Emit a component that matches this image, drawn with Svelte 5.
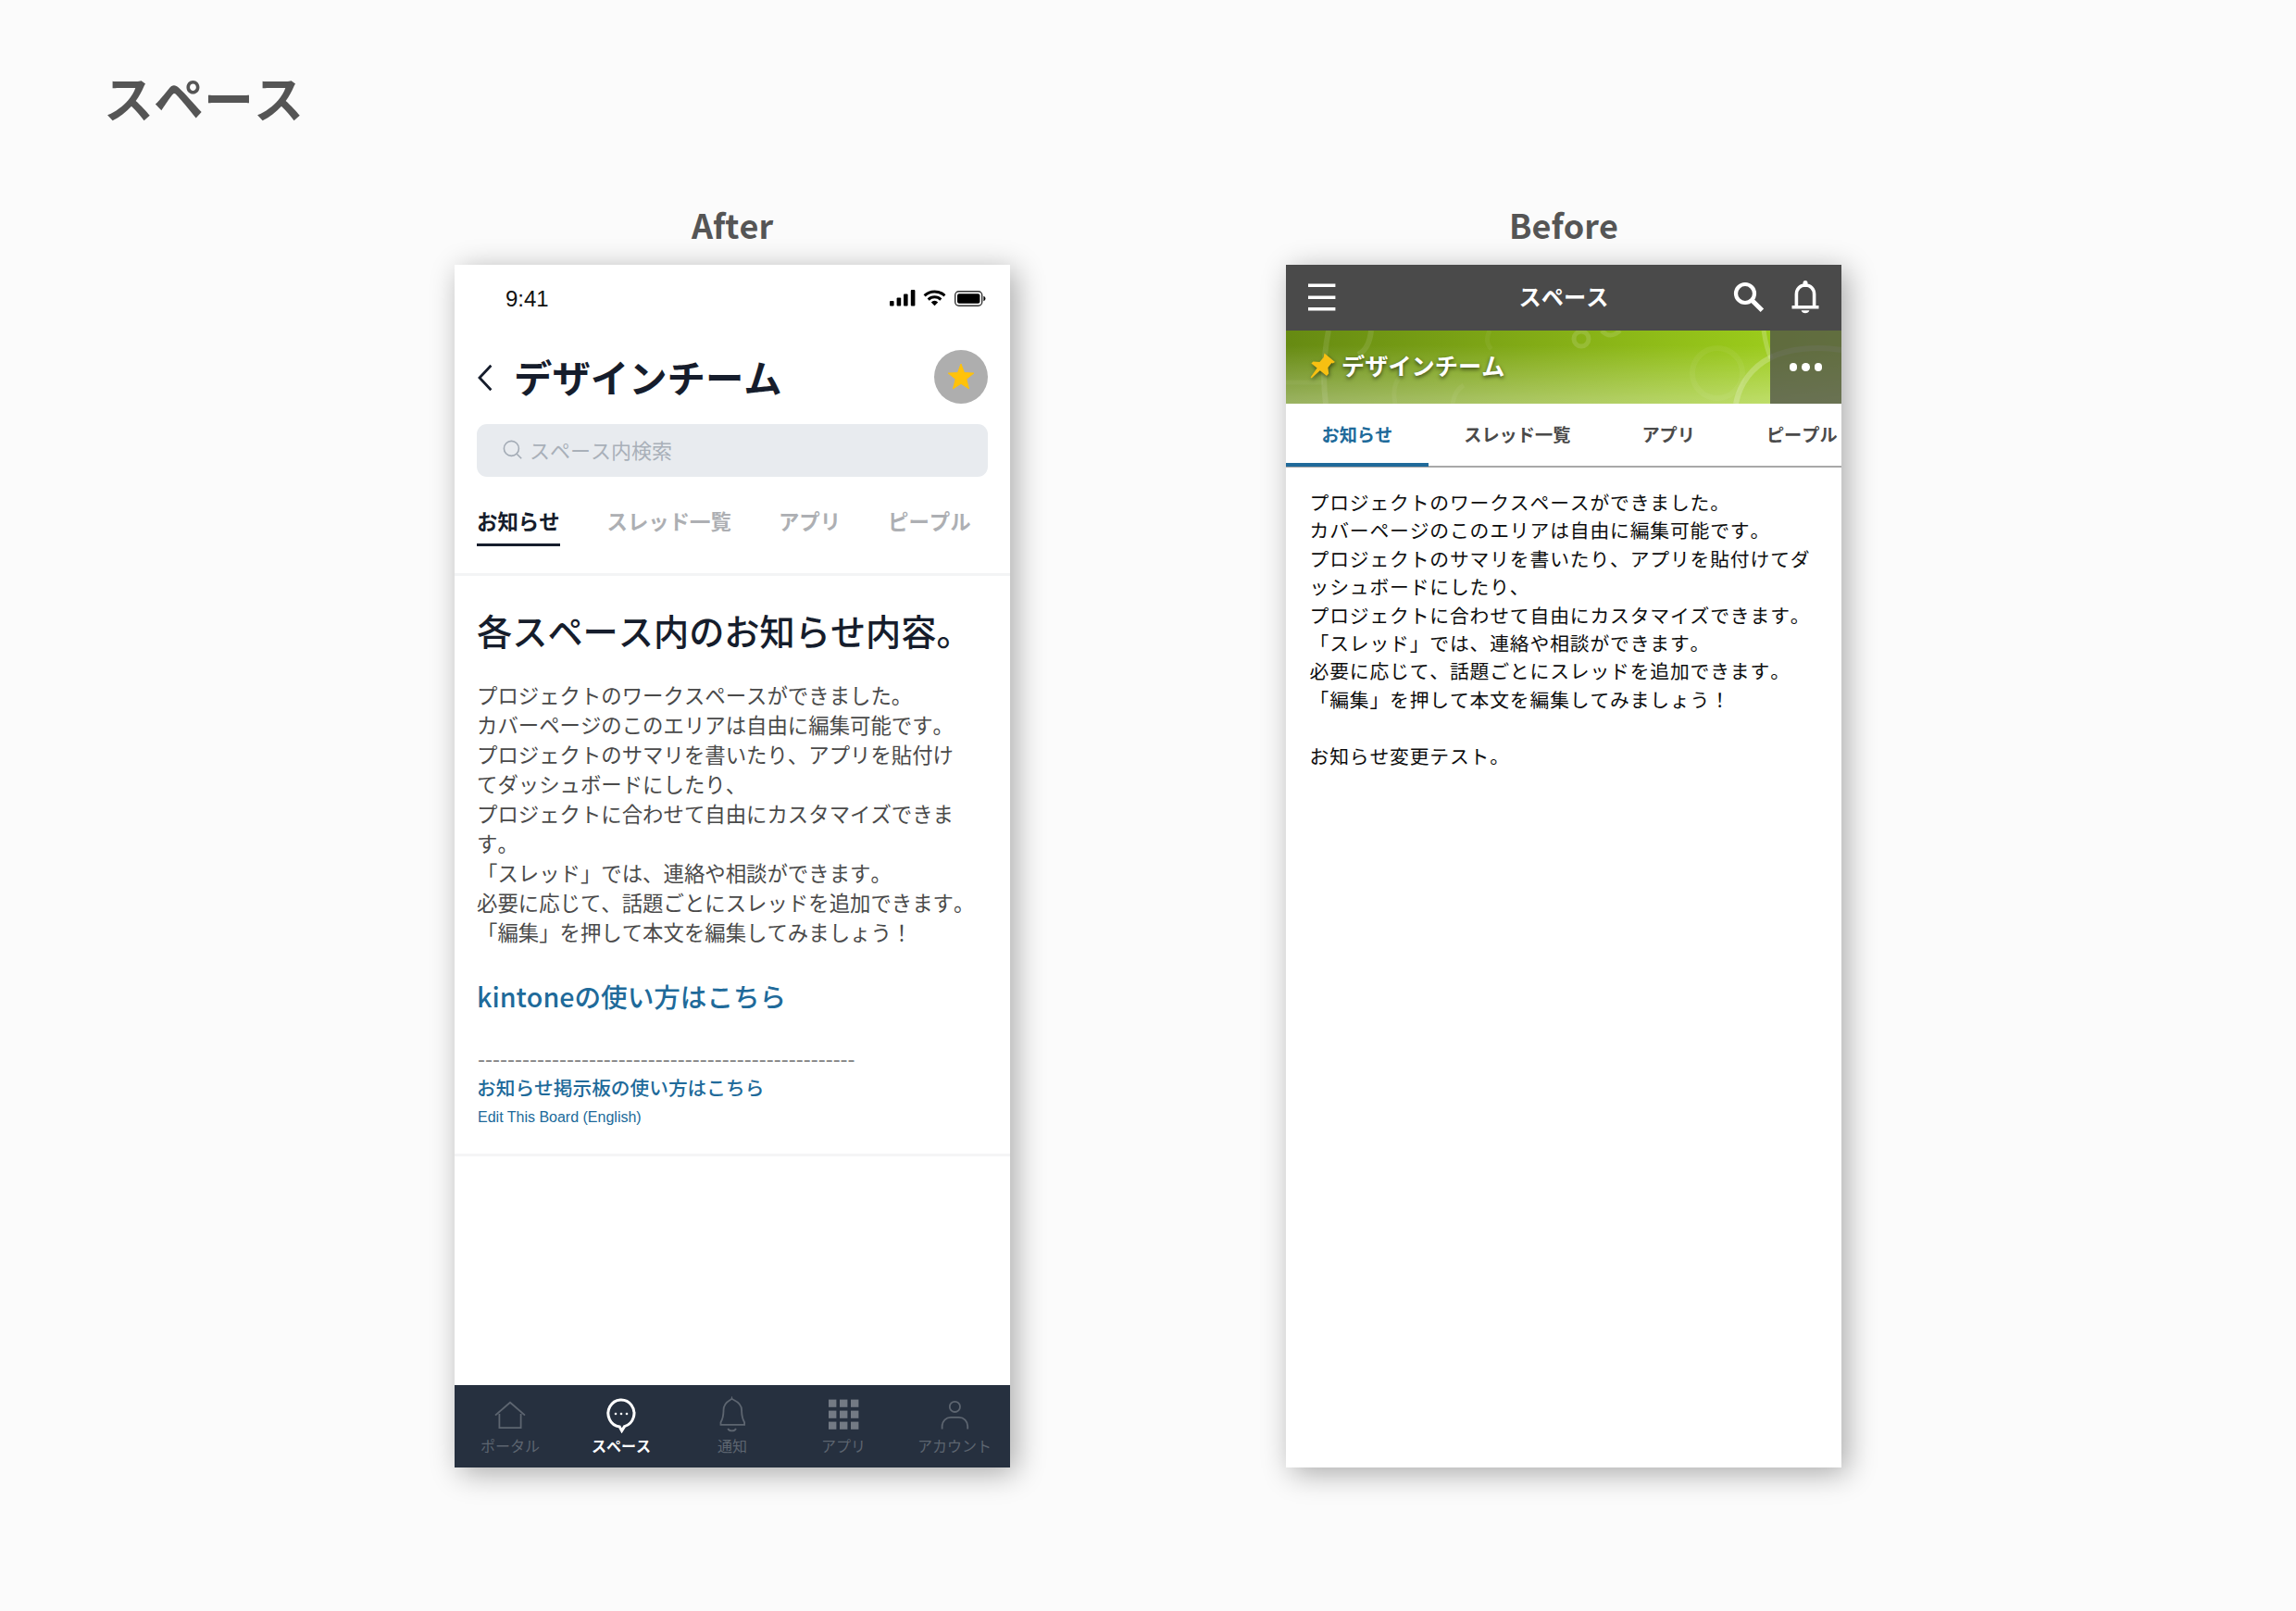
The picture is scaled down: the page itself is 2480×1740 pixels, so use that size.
<script>
  const tabs = ['お知らせ', 'スレッド一覧', 'アプリ', 'ピープル'];
  const afterLines = [
    'プロジェクトのワークスペースができました。',
    'カバーページのこのエリアは自由に編集可能です。',
    'プロジェクトのサマリを書いたり、アプリを貼付け',
    'てダッシュボードにしたり、',
    'プロジェクトに合わせて自由にカスタマイズできま',
    'す。',
    '「スレッド」では、連絡や相談ができます。',
    '必要に応じて、話題ごとにスレッドを追加できます。',
    '「編集」を押して本文を編集してみましょう！'
  ];
  const beforeLines = [
    'プロジェクトのワークスペースができました。',
    'カバーページのこのエリアは自由に編集可能です。',
    'プロジェクトのサマリを書いたり、アプリを貼付けてダ',
    'ッシュボードにしたり、',
    'プロジェクトに合わせて自由にカスタマイズできます。',
    '「スレッド」では、連絡や相談ができます。',
    '必要に応じて、話題ごとにスレッドを追加できます。',
    '「編集」を押して本文を編集してみましょう！',
    '\u00a0',
    'お知らせ変更テスト。'
  ];
  const dashes = '-'.repeat(51);
</script>

<main class="page">
  <h1>スペース</h1>
  <div class="columns">
    <section class="column">
      <h2>After</h2>
      <div class="phone">
        <div class="status">
          <span class="time">9:41</span>
          <svg class="signals" width="106" height="20" viewBox="0 0 106 20">
            <rect x="1" y="13" width="4.6" height="5.6" rx="1" />
            <rect x="8.6" y="9.6" width="4.6" height="9" rx="1" />
            <rect x="16" y="5.6" width="4.6" height="13" rx="1" />
            <rect x="23.8" y="1" width="4.6" height="17.6" rx="1" />
            <g fill="none" stroke="#000" stroke-width="3">
              <path d="M38.6 7.4a15.4 15.4 0 0 1 21.8 0" />
              <path d="M42.7 11.6a9.600 9.600 0 0 1 13.600 0" />
            </g>
            <path d="M45.800 14.500a5 5 0 0 1 7.400 0l-3.700 3.700z" />
            <rect x="71.700" y="2.800" width="29" height="15.400" rx="4" fill="#fff" stroke="#333" stroke-width="1.400" />
            <rect x="74" y="5.200" width="24.400" height="10.600" rx="2" />
            <path d="M102.400 7.800v5.400c2.800-1.200 2.800-4.200 0-5.400z" />
          </svg>
        </div>
        <div class="title-row">
          <svg class="back" width="18" height="30" viewBox="0 0 18 30">
            <path d="M15.4 1.8 3 15l12.4 13.2" fill="none" stroke="#161d2c" stroke-width="2.8" />
          </svg>
          <span class="space-name">デザインチーム</span>
          <span class="star">
            <svg width="30" height="30" viewBox="0 0 30 30">
              <path d="m15 1 3.500 9.600 10.300.5-8 6.300 2.700 10.400L15 22.300l-8.500 5.500 2.700-10.400-8-6.300 10.300-.5z" fill="#ffc20a" stroke="#ffc20a" stroke-linejoin="round" />
            </svg>
          </span>
        </div>
        <div class="search">
          <svg width="22" height="22" viewBox="0 0 22 22" fill="none" stroke="#a3abb5" stroke-width="1.6">
            <circle cx="9.4" cy="9.4" r="8" />
            <path d="m15.2 15.2 5 5" />
          </svg>
          <span>スペース内検索</span>
        </div>
        <nav class="tabs">
          {#each tabs as tab, i}
            <span class="tab" class:active={i === 0}>{tab}</span>
          {/each}
        </nav>
        <article class="notice">
          <h3>各スペース内のお知らせ内容。</h3>
          <div class="lines">
            {#each afterLines as line}
              <p>{line}</p>
            {/each}
          </div>
          <span class="guide">kintoneの使い方はこちら</span>
          <p class="dashes">{dashes}</p>
          <span class="board">お知らせ掲示板の使い方はこちら</span>
          <span class="english">Edit This Board (English)</span>
        </article>
        <footer class="nav">
          <div class="item">
            <svg width="40" height="40" viewBox="0 0 40 40">
              <path d="M4 20.6 20 6.8l16 13.8M8.4 19v15.2h23.2V19" />
            </svg>
            <span>ポータル</span>
          </div>
          <div class="item current">
            <svg width="40" height="40" viewBox="0 0 40 40">
              <path d="M20.600 37.400 18.200 33a14 14.600 0 1 1 5.400-.4z" />
              <g class="solid">
                <circle cx="14" cy="19" r="1.3" />
                <circle cx="20" cy="19" r="1.3" />
                <circle cx="26" cy="19" r="1.3" />
              </g>
            </svg>
            <span>スペース</span>
          </div>
          <div class="item">
            <svg width="40" height="40" viewBox="0 0 40 40">
              <path d="M19.500 2.600c-.6 2-9 2.600-9 12.600 0 7-.6 9-3 13v2.600h25.600v-2.600c-2.400-4-3-6-3-13 0-10-10-10.600-10.600-12.600zM15.200 35c1.600 3.200 7.200 3.200 8.800 0" />
            </svg>
            <span>通知</span>
          </div>
          <div class="item">
            <svg width="40" height="40" viewBox="0 0 40 40">
              <g class="cells">
                {#each [3.6, 15.6, 27.6] as y}
                  {#each [4, 16, 28] as x}
                    <rect {x} {y} width="8.4" height="8.2" />
                  {/each}
                {/each}
              </g>
            </svg>
            <span>アプリ</span>
          </div>
          <div class="item">
            <svg width="40" height="40" viewBox="0 0 40 40">
              <circle cx="20.4" cy="11.4" r="5.6" />
              <path d="M6.600 35.600v-3.400a9.400 9.400 0 0 1 9.400-9.400h8.800a9.400 9.400 0 0 1 9.400 9.400v3.400" />
            </svg>
            <span>アカウント</span>
          </div>
        </footer>
      </div>
    </section>

    <section class="column">
      <h2>Before</h2>
      <div class="phone">
        <header class="bar">
          <svg width="30" height="30" viewBox="0 0 30 30">
            <path d="M0 2.300h29.400M0 15.200h29.400M0 27.800h29.400" stroke="#fff" stroke-width="3.600" />
          </svg>
          <span class="bar-title">スペース</span>
          <span class="bar-icons">
            <svg width="34" height="34" viewBox="0 0 34 34" fill="none" stroke="#fff">
              <circle cx="13" cy="13" r="10" stroke-width="4.200" />
              <path d="m20 20 11.400 11.200" stroke-width="5" />
            </svg>
            <svg width="30" height="36" viewBox="0 0 30 36">
              <path d="M15 2.500v2" stroke="#fff" stroke-width="5" stroke-linecap="round" />
              <path d="M5.400 28V14.800C5.400 9 9.400 5 15 5s9.600 4 9.600 9.800V28M.5 28.800h29" fill="none" stroke="#fff" stroke-width="3.600" />
              <path d="M10.600 32.200h8.800c-.8 4-8 4-8.800 0z" fill="#fff" />
            </svg>
          </span>
        </header>
        <div class="cover">
          <svg class="pattern" viewBox="0 0 600 79" preserveAspectRatio="none" fill="none" stroke="#fff">
            <path d="M46 0q-8 40-3 79M92 0q-2 20-14 26" stroke-opacity=".1" stroke-width="6" />
            <path d="M118 79q-4-20 6-30M0 56h40M220 0q-6 12 2 20M180 79q2-14 12-20" stroke-opacity=".05" stroke-width="5" />
            <circle cx="319" cy="9" r="8" stroke-opacity=".13" stroke-width="5" />
            <path d="M341 0q9 10 20 0" stroke-opacity=".12" stroke-width="5" />
            <circle cx="466" cy="46" r="27" stroke-opacity=".05" stroke-width="6" />
            <path d="M516 0q3 20 8 30" stroke-opacity=".2" stroke-width="5" />
            <path d="M486 79c4-22 18-40 38-50 20-10 50-12 76-8" stroke-opacity=".22" stroke-width="6" />
          </svg>
          <svg class="pin" width="30" height="30" viewBox="0 0 30 30">
            <path d="m16.500 1.500 11.500 9.500-2.600 1.600-1-.6-4 5 .8 6.400-2.200 2.600-7.200-5.800L2.600 28.400 1.600 27.600 8.600 17.600 2.400 12.600 4.400 10.400l7 .6 4.200-5z" fill="#f7c012" />
          </svg>
          <span class="cover-name">デザインチーム</span>
          <span class="more">
            <i></i><i></i><i></i>
          </span>
        </div>
        <nav class="old-tabs">
          {#each tabs as tab, i}
            <span class="old-tab" class:active={i === 0}>{tab}</span>
          {/each}
        </nav>
        <div class="old-lines">
          {#each beforeLines as line}
            <p>{line}</p>
          {/each}
        </div>
      </div>
    </section>
  </div>
</main>

<style>
  :global(body) {
    margin: 0;
    background: #fbfbfb;
  }
  .page {
    box-sizing: border-box;
    width: 2480px;
    height: 1740px;
    overflow: hidden;
    font-family: 'Noto Sans CJK JP', sans-serif;
    font-kerning: none;
    background: #fbfbfb;
  }
  h1, h2, h3, p {
    margin: 0;
  }
  p, span, h1, h3 {
    white-space: nowrap;
  }
  h1 {
    height: 210px;
    padding-left: 112px;
    font-size: 54px;
    line-height: 209px;
    font-weight: 700;
    color: #555;
  }
  .columns {
    display: flex;
    gap: 298px;
    padding-left: 491px;
  }
  .column {
    width: 600px;
  }
  h2 {
    height: 76px;
    font-size: 36px;
    line-height: 64px;
    font-weight: 700;
    text-align: center;
    color: #555;
  }
  .phone {
    display: flex;
    flex-direction: column;
    width: 600px;
    height: 1299px;
    background: #fff;
    box-shadow: 6px 6px 30px rgba(0, 0, 0, 0.33);
  }

  .status {
    display: flex;
    align-items: center;
    justify-content: space-between;
    height: 72px;
    padding: 0 25px 0 55px;
  }
  .time {
    padding-top: 1px;
    font: 24px 'Liberation Sans', sans-serif;
    color: #111;
  }
  .title-row {
    display: flex;
    align-items: center;
    height: 97px;
    padding: 0 24px;
  }
  .back {
    margin-top: 2px;
  }
  .space-name {
    flex: 1;
    margin-left: 22px;
    padding-bottom: 2px;
    font-size: 41.4px;
    line-height: 60px;
    font-weight: 700;
    color: #161d2c;
  }
  .star {
    display: flex;
    align-items: center;
    justify-content: center;
    width: 58px;
    height: 58px;
    border-radius: 50%;
    background: #aeaeae;
  }
  .search {
    display: flex;
    align-items: center;
    gap: 7px;
    height: 57px;
    margin: 2.5px 24px 0;
    padding-left: 28px;
    border-radius: 11px;
    background: #e8ebef;
    font-size: 22px;
    color: #a9b0b9;
  }
  .search span {
    padding-bottom: 2px;
  }
  .tabs {
    display: flex;
    gap: 51px;
    box-sizing: border-box;
    height: 107.5px;
    padding: 31px 0 0 24px;
    border-bottom: 3px solid #f3f4f5;
  }
  .tab {
    box-sizing: border-box;
    height: 44px;
    font-size: 22.4px;
    line-height: 32px;
    font-weight: 700;
    color: #adafb3;
  }
  .tab.active {
    color: #161d2c;
    border-bottom: 3.5px solid #161d2c;
  }
  .notice {
    display: flex;
    flex-direction: column;
    align-items: flex-start;
    height: 624px;
    padding-left: 24px;
    border-bottom: 3px solid #f5f5f6;
  }
  h3 {
    margin-top: 29px;
    font-size: 38.2px;
    line-height: 60px;
    font-weight: 500;
    color: #161d2c;
  }
  .lines {
    margin-top: 23px;
    font-size: 22.4px;
    line-height: 32px;
    color: #4a4a4a;
  }
  .guide {
    margin-top: 32px;
    font-size: 28.6px;
    line-height: 44px;
    font-weight: 500;
    color: #206a9a;
  }
  .dashes {
    margin-top: 31px;
    padding-left: 1px;
    font: 24px/30px 'Liberation Sans', sans-serif;
    color: #8a8a8a;
  }
  .board {
    margin-top: -1px;
    font-size: 20.7px;
    line-height: 32px;
    font-weight: 500;
    color: #206a9a;
  }
  .english {
    padding-left: 1px;
    margin-top: 3px;
    font: 16px/28px 'Liberation Sans', sans-serif;
    color: #206a9a;
  }
  .nav {
    display: flex;
    height: 89px;
    margin-top: auto;
    background: #26303f;
  }
  .item {
    display: flex;
    flex-direction: column;
    align-items: center;
    width: 120px;
    padding-top: 12px;
    font-size: 16px;
    line-height: 22px;
    color: #5d6570;
  }
  .item svg {
    fill: none;
    stroke: #5d6570;
    stroke-width: 1.8;
  }
  .item span {
    margin-top: 2px;
  }
  .item .cells {
    fill: #737a84;
    stroke: none;
  }
  .current {
    color: #fff;
    font-weight: 700;
  }
  .current svg {
    stroke: #fff;
    stroke-width: 3;
  }
  .current .solid {
    fill: #fff;
    stroke: none;
  }

  .bar {
    display: grid;
    grid-template-columns: 1fr auto 1fr;
    align-items: center;
    height: 70.5px;
    padding: 0 24px;
    background: #4a4a4a;
  }
  .bar-title {
    padding-bottom: 2px;
    font-size: 24.2px;
    line-height: 40px;
    font-weight: 700;
    color: #fff;
  }
  .bar-icons {
    display: flex;
    align-items: center;
    justify-content: flex-end;
    gap: 29px;
  }
  .cover {
    position: relative;
    display: flex;
    align-items: center;
    height: 79.5px;
    padding-left: 25px;
    background:
      linear-gradient(to bottom, rgba(255, 255, 255, 0) 20%, rgba(255, 255, 255, 0.34) 100%),
      linear-gradient(100deg, #668a12 0%, #83ac16 45%, #98c71a 80%, #a6d622 100%);
  }
  .pattern {
    position: absolute;
    inset: 0;
    width: 600px;
    height: 79px;
  }
  .pin {
    position: relative;
    margin-bottom: 2px;
    filter: drop-shadow(1px 2px 2px rgba(0, 0, 0, 0.5));
  }
  .cover-name {
    position: relative;
    margin-left: 5px;
    flex: 1;
    padding-bottom: 4px;
    font-size: 25.2px;
    line-height: 74px;
    font-weight: 700;
    color: #fff;
    text-shadow: 0 2px 4px rgba(0, 0, 0, 0.6);
  }
  .more {
    position: relative;
    display: flex;
    align-items: center;
    justify-content: center;
    gap: 5px;
    width: 77px;
    height: 79.5px;
    background: rgba(74, 74, 74, 0.74);
  }
  .more i {
    width: 8.6px;
    height: 8.6px;
    border-radius: 50%;
    background: #fff;
  }
  .old-tabs {
    display: flex;
    height: 67px;
    border-bottom: 2px solid #a8a8a8;
  }
  .old-tab {
    box-sizing: border-box;
    height: 68px;
    padding: 0 38.5px;
    font-size: 19.2px;
    line-height: 67px;
    font-weight: 700;
    color: #4a4a4a;
  }
  .old-tab:last-child {
    padding-right: 0;
  }
  .old-tab.active {
    color: #206a9a;
    border-bottom: 4px solid #206a9a;
  }
  .old-lines {
    padding: 22px 0 0 25.5px;
    font-size: 20.8px;
    line-height: 30.4px;
    letter-spacing: 0.84px;
    color: #0d0d0d;
  }
</style>
